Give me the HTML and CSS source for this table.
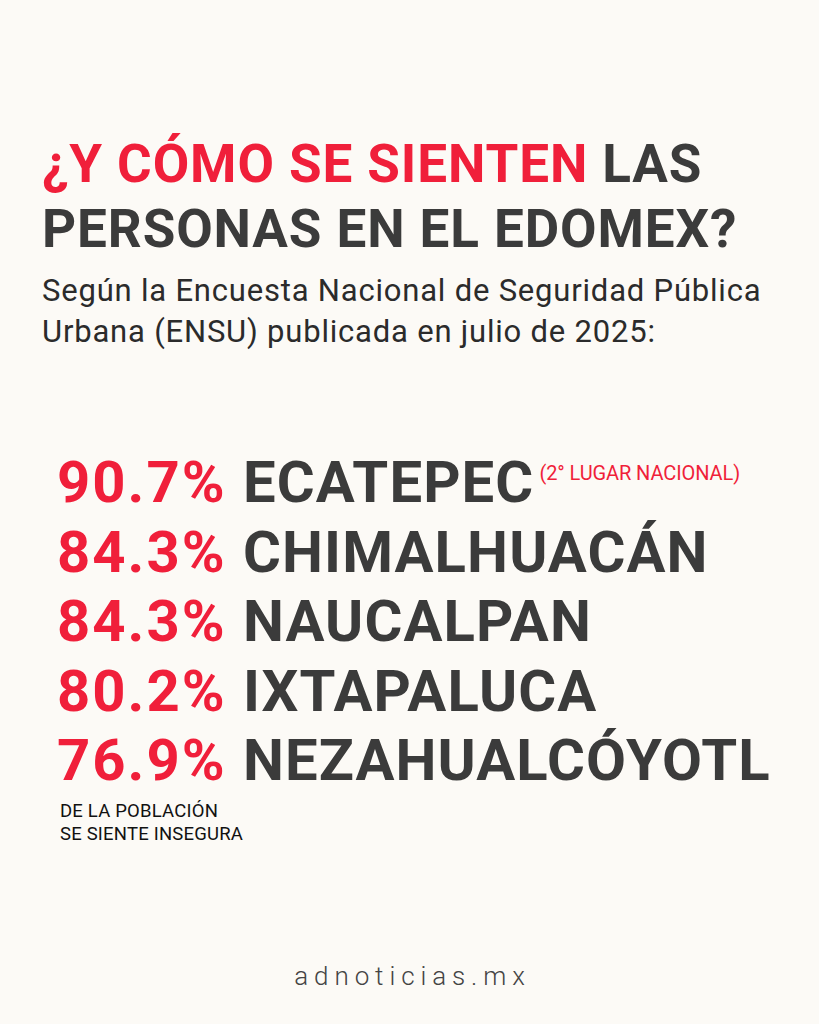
FILE: index.html
```html
<!DOCTYPE html>
<html lang="es">
<head>
<meta charset="utf-8">
<title>¿Y cómo se sienten las personas en el Edomex?</title>
<link rel="stylesheet" href="styles.css">
</head>
<body>
<main class="page">
  <header class="intro">
    <h1 class="title"><span class="accent">¿Y CÓMO SE SIENTEN</span> LAS<br>PERSONAS EN EL EDOMEX?</h1>
    <p class="subtitle">Según la Encuesta Nacional de Seguridad Pública<br>Urbana (ENSU) publicada en julio de 2025:</p>
  </header>
  <section class="stats">
    <div class="row"><span class="pct">90.7%</span><span class="city">ECATEPEC<sup class="note">(2° LUGAR NACIONAL)</sup></span></div>
    <div class="row"><span class="pct">84.3%</span><span class="city">CHIMALHUACÁN</span></div>
    <div class="row"><span class="pct">84.3%</span><span class="city">NAUCALPAN</span></div>
    <div class="row"><span class="pct">80.2%</span><span class="city">IXTAPALUCA</span></div>
    <div class="row"><span class="pct">76.9%</span><span class="city">NEZAHUALCÓYOTL</span></div>
  </section>
  <p class="footnote">DE LA POBLACIÓN<br>SE SIENTE INSEGURA</p>
  <footer class="brand">adnoticias.mx</footer>
</main>
</body>
</html>
```
FILE: styles.css
```css
html, body {
  margin: 0;
  padding: 0;
}
body {
  background: #fcfaf6;
  font-family: Roboto, "Liberation Sans", sans-serif;
  color: #3b3b3b;
}
.page {
  width: 819px;
  height: 1024px;
  box-sizing: border-box;
  padding-top: 132px;
  display: flex;
  flex-direction: column;
}
.intro {
  padding-left: 42px;
}
.title {
  margin: 0;
  font-size: 53px;
  line-height: 65px;
  font-weight: 700;
  letter-spacing: 0.9px;
  color: #3b3b3b;
}
.accent {
  color: #f01f3a;
}
.subtitle {
  margin: 8px 0 0;
  font-size: 31px;
  line-height: 41px;
  font-weight: 400;
  letter-spacing: 0.8px;
  color: #2b2b2b;
}
.stats {
  margin-top: 96px;
  padding-left: 57px;
  display: flex;
  flex-direction: column;
}
.row {
  display: grid;
  grid-template-columns: 186px auto;
  font-size: 58px;
  line-height: 69.5px;
  font-weight: 700;
}
.pct {
  color: #f01f3a;
  letter-spacing: 2px;
}
.city {
  color: #3b3b3b;
  letter-spacing: 1.1px;
}
.note {
  font-size: 20px;
  font-weight: 400;
  color: #f01f3a;
  vertical-align: 22px;
  line-height: 0;
  margin-left: 5px;
  letter-spacing: -0.1px;
}
.footnote {
  margin: 4px 0 0;
  padding-left: 60px;
  font-size: 18.5px;
  line-height: 23px;
  font-weight: 400;
  letter-spacing: 0.2px;
  color: #111;
}
.brand {
  margin-top: auto;
  margin-bottom: 33px;
  padding-left: 6px;
  text-align: center;
  font-size: 26px;
  font-weight: 300;
  letter-spacing: 5.9px;
  color: #444;
}
```
